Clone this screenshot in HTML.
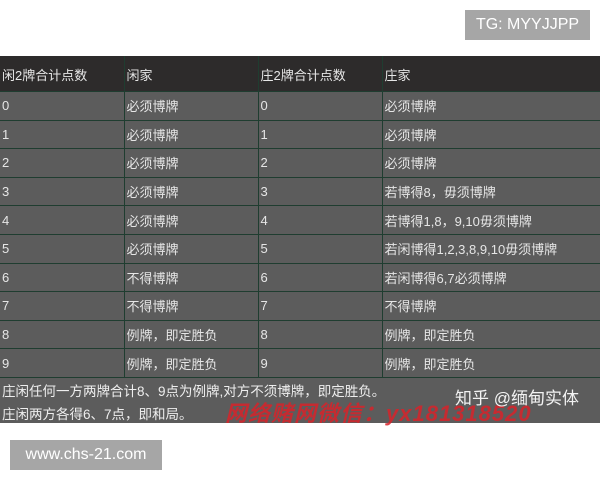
<!DOCTYPE html>
<html><head><meta charset="utf-8"><style>
body{margin:0;width:600px;height:480px;background:#fff;position:relative;overflow:hidden;font-family:"Liberation Sans","Noto Sans CJK SC",sans-serif}
.box{position:absolute;background:#a6a6a6;color:#fff;font-size:16px;display:flex;align-items:center;justify-content:center}
#img{position:absolute;left:0;top:56px;width:600px;height:367px;background:#5c5c5c}
table{border-collapse:collapse;position:absolute;left:0;top:0;width:600px;table-layout:fixed}
td{border:1px solid #1f3d30;color:#e6e6e6;font-size:13px;height:28.6px;padding:0 0 0 2px;box-sizing:border-box;white-space:nowrap;overflow:hidden}
tr.h td{background:#2d2b2b;height:35px;border-color:#2d2b2b #1f3d30 #1f3d30}
tr td:first-child{border-left:none}
tr td:last-child{border-right:none}
.f{position:absolute;left:2px;color:#eee;font-size:13.5px}
</style></head><body>
<div class="box" style="left:465px;top:10px;width:125px;height:30px">TG: MYYJJPP</div>
<div id="img">
<table>
<colgroup><col style="width:124px"><col style="width:134px"><col style="width:124px"><col style="width:218px"></colgroup>
<tr class="h"><td>闲2牌合计点数</td><td>闲家</td><td>庄2牌合计点数</td><td>庄家</td></tr>
<tr><td>0</td><td>必须博牌</td><td>0</td><td>必须博牌</td></tr>
<tr><td>1</td><td>必须博牌</td><td>1</td><td>必须博牌</td></tr>
<tr><td>2</td><td>必须博牌</td><td>2</td><td>必须博牌</td></tr>
<tr><td>3</td><td>必须博牌</td><td>3</td><td>若博得8，毋须博牌</td></tr>
<tr><td>4</td><td>必须博牌</td><td>4</td><td>若博得1,8，9,10毋须博牌</td></tr>
<tr><td>5</td><td>必须博牌</td><td>5</td><td>若闲博得1,2,3,8,9,10毋须博牌</td></tr>
<tr><td>6</td><td>不得博牌</td><td>6</td><td>若闲博得6,7必须博牌</td></tr>
<tr><td>7</td><td>不得博牌</td><td>7</td><td>不得博牌</td></tr>
<tr><td>8</td><td>例牌，即定胜负</td><td>8</td><td>例牌，即定胜负</td></tr>
<tr><td>9</td><td>例牌，即定胜负</td><td>9</td><td>例牌，即定胜负</td></tr>
</table>
<div class="f" style="top:324px">庄闲任何一方两牌合计8、9点为例牌,对方不须博牌，即定胜负。</div>
<div class="f" style="top:347px">庄闲两方各得6、7点，即和局。</div>
<div style="position:absolute;left:225px;top:340px;color:#d8232a;font-size:22px;font-weight:bold;font-style:italic;opacity:.85;white-space:nowrap;letter-spacing:1px">网络赌网微信：yx181318520</div>
<div style="position:absolute;left:455px;top:328px;color:#f2f2f2;font-size:17px">知乎 @缅甸实体</div>
</div>
<div class="box" style="left:10px;top:440px;width:152px;height:30px">www.chs-21.com</div>
</body></html>
